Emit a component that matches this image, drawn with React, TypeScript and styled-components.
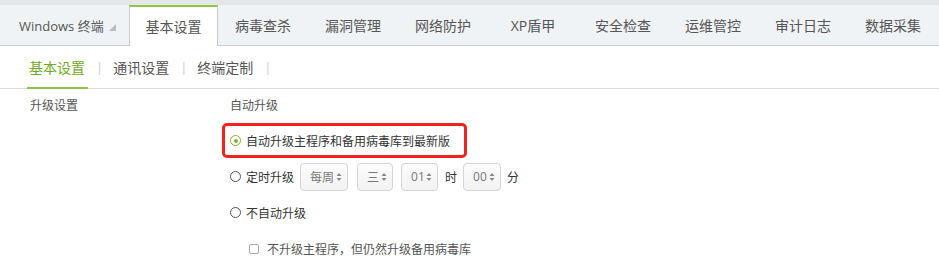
import React, { useState } from 'react';
import styled, { createGlobalStyle } from 'styled-components';

const GlobalStyle = createGlobalStyle`
  body {
    margin: 0;
    background: #fff;
    font-family: "Open Sans", "Noto Sans CJK SC", sans-serif;
    color: #555;
  }
`;

const GREEN = '#8cc63f';

const Header = styled.div`
  background: #e4e7ea;
  padding-top: 5px;
`;

const TabBar = styled.div`
  display: flex;
  height: 40px;
  background: #f0f3f6;
  border-bottom: 1px solid #c9cbcd;
`;

const Terminal = styled.div`
  width: 110px;
  padding-left: 19px;
  display: flex;
  align-items: center;
  font-size: 13px;
  color: #555;
  > svg {
    margin-left: 5px;
    margin-top: 4px;
  }
`;

const Tab = styled.div<{ $active?: boolean }>`
  width: 90px;
  box-sizing: border-box;
  display: flex;
  align-items: center;
  justify-content: center;
  font-size: 14px;
  color: #555;
  ${(p) =>
    p.$active &&
    `
    background: #fff;
    border-top: 2px solid ${GREEN};
    border-left: 1px solid #c9cbcd;
    border-right: 1px solid #c9cbcd;
    height: 41px;
    width: 89px;
    padding-bottom: 2px;
  `}
`;

const SubNav = styled.div`
  display: flex;
  align-items: stretch;
  height: 42px;
  padding-left: 27px;
  border-bottom: 1px solid #dcdcdc;
`;

const SubItem = styled.div<{ $active?: boolean }>`
  display: flex;
  align-items: center;
  padding: 0 3px 0 2px;
  font-size: 14px;
  color: ${(p) => (p.$active ? '#6faa25' : '#555')};
  border-bottom: 2px solid ${(p) => (p.$active ? GREEN : 'transparent')};
  margin-bottom: -1px;
  padding-top: 1px;
`;

const Sep = styled.div`
  display: flex;
  align-items: center;
  padding: 0 8px 0 8px;
  color: #ccc;
  font-size: 13px;
`;

const Content = styled.div`
  display: grid;
  grid-template-columns: 200px 1fr;
  padding: 8px 0 0 30px;
`;

const Label = styled.div`
  font-size: 12px;
  line-height: 18px;
  color: #555;
`;

const Field = styled.div`
  display: flex;
  flex-direction: column;
  align-items: flex-start;
`;

const FieldTitle = styled.div`
  font-size: 12px;
  line-height: 18px;
  color: #555;
  margin-bottom: 8px;
`;

const Option = styled.div<{ $highlight?: boolean; $indent?: number }>`
  display: flex;
  align-items: center;
  height: 35px;
  box-sizing: border-box;
  margin-left: -8px;
  margin-top: ${(p) => (p.$highlight ? '0' : '1px')};
  padding-left: ${(p) => 5 + (p.$indent || 0)}px;
  padding-right: ${(p) => (p.$highlight ? 14 : 0)}px;
  border: 3px solid ${(p) => (p.$highlight ? '#f2231c' : 'transparent')};
  border-radius: 5px;
  font-size: 12px;
  color: #333;
  white-space: nowrap;
  cursor: pointer;
`;

const Radio = styled.span<{ $checked?: boolean }>`
  width: 11px;
  height: 11px;
  box-sizing: border-box;
  border-radius: 50%;
  border: 1.5px solid ${(p) => (p.$checked ? '#7cb82f' : '#555')};
  display: inline-flex;
  align-items: center;
  justify-content: center;
  margin-right: 5px;
  flex-shrink: 0;
  &::after {
    content: '';
    width: 4px;
    height: 4px;
    border-radius: 50%;
    background: ${(p) => (p.$checked ? '#7cb82f' : 'transparent')};
  }
`;

const Check = styled.span`
  width: 10px;
  height: 10px;
  box-sizing: border-box;
  border: 1px solid #aaa;
  border-radius: 2px;
  margin-right: 8px;
  flex-shrink: 0;
`;

const MutedText = styled.span`
  color: #555;
`;

const Select = styled.span<{ $w: number; $gap: number }>`
  display: inline-flex;
  align-items: center;
  justify-content: space-between;
  flex-shrink: 0;
  width: ${(p) => p.$w}px;
  height: 28px;
  box-sizing: border-box;
  padding: 0 5px 0 9px;
  margin-left: ${(p) => p.$gap}px;
  border: 1px solid #d4d4d4;
  border-radius: 4px;
  background: linear-gradient(#fcfcfc, #f2f2f2);
  color: #777;
  font-size: 12px;
`;

const Unit = styled.span<{ $gap: number }>`
  color: #333;
  margin-left: ${(p) => p.$gap}px;
`;

const Caret = () => (
  <svg width="6" height="10" viewBox="0 0 6 10">
    <path d="M0.5 4 L3 1 L5.5 4 Z M0.5 6 L3 9 L5.5 6 Z" fill="#888" />
  </svg>
);

const Corner = () => (
  <svg width="7" height="7" viewBox="0 0 7 7">
    <path d="M7 0 L7 7 L0 7 Z" fill="#bbb" />
  </svg>
);

const tabs = ['基本设置', '病毒查杀', '漏洞管理', '网络防护', 'XP盾甲', '安全检查', '运维管控', '审计日志', '数据采集'];
const subs = ['基本设置', '通讯设置', '终端定制'];

export default function App() {
  const [mode, setMode] = useState(0);
  return (
    <>
      <GlobalStyle />
      <Header>
        <TabBar>
          <Terminal>
            Windows 终端
            <Corner />
          </Terminal>
          {tabs.map((t, i) => (
            <Tab key={t} $active={i === 0}>
              {t}
            </Tab>
          ))}
        </TabBar>
      </Header>
      <SubNav>
        {subs.map((s, i) => (
          <React.Fragment key={s}>
            <SubItem $active={i === 0}>{s}</SubItem>
            <Sep>|</Sep>
          </React.Fragment>
        ))}
      </SubNav>
      <Content>
        <Label>升级设置</Label>
        <Field>
          <FieldTitle>自动升级</FieldTitle>
          <Option $highlight onClick={() => setMode(0)}>
            <Radio $checked={mode === 0} />
            自动升级主程序和备用病毒库到最新版
          </Option>
          <Option onClick={() => setMode(1)}>
            <Radio $checked={mode === 1} />
            定时升级
            <Select $w={48} $gap={6}>
              每周
              <Caret />
            </Select>
            <Select $w={36} $gap={9}>
              三
              <Caret />
            </Select>
            <Select $w={37} $gap={8}>
              01
              <Caret />
            </Select>
            <Unit $gap={7}>时</Unit>
            <Select $w={38} $gap={6}>
              00
              <Caret />
            </Select>
            <Unit $gap={6}>分</Unit>
          </Option>
          <Option onClick={() => setMode(2)}>
            <Radio $checked={mode === 2} />
            不自动升级
          </Option>
          <Option $indent={19}>
            <Check />
            <MutedText>不升级主程序，但仍然升级备用病毒库</MutedText>
          </Option>
        </Field>
      </Content>
    </>
  );
}
